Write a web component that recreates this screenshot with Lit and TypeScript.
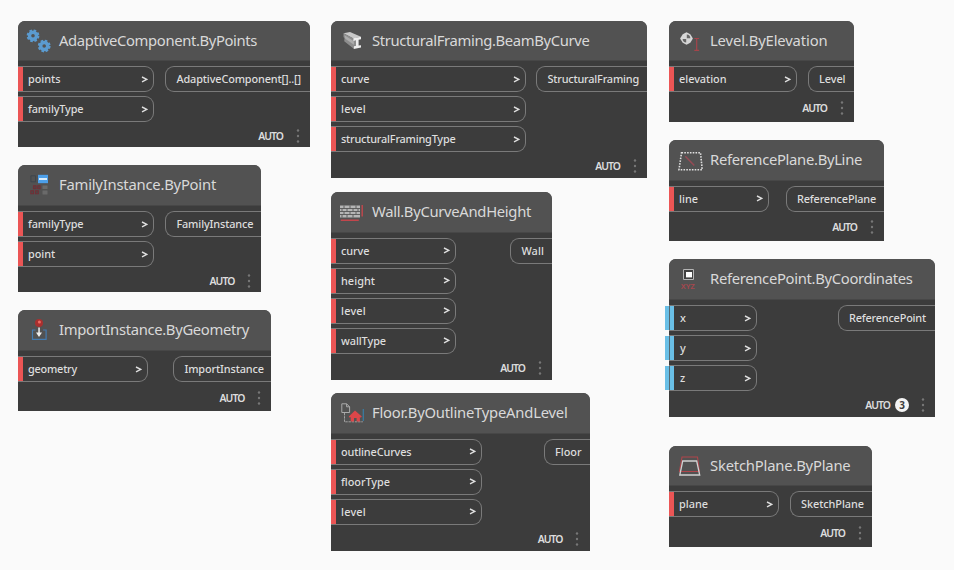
import { LitElement, html, css, svg, nothing } from "lit";
import { customElement, property } from "lit/decorators.js";
import { styleMap } from "lit/directives/style-map.js";

// A caption and the width in pixels it is set to.
type Label = [text: string, width: number];

interface GraphNode {
  icon: string;
  x: number;
  y: number;
  w: number;
  h: number;
  head: number;
  title: Label;
  inputs: Label[];
  inputWidth: number;
  output: Label;
  outputWidth: number;
  laced?: number;
}

const FAMILY = '"Noto Sans", sans-serif';
const TITLE_FONT = `400 14.8px ${FAMILY}`;
const PORT_FONT = `500 10.9px ${FAMILY}`;

const pen = document.createElement("canvas").getContext("2d")!;

function tracking([text, width]: Label, font: string) {
  pen.font = font;
  const spacing = (width + 1 - pen.measureText(text).width) / text.length;
  return styleMap({ letterSpacing: `${spacing.toFixed(3)}px` });
}

const NODES: GraphNode[] = [
  { icon: "gears", x: 18, y: 21, w: 292, h: 126, head: 40, title: ["AdaptiveComponent.ByPoints", 197], inputs: [["points", 31.5], ["familyType", 54.5]], inputWidth: 136, output: ["AdaptiveComponent[]..[]", 123.5], outputWidth: 145 },
  { icon: "family", x: 18, y: 165, w: 243.4, h: 127, head: 41, title: ["FamilyInstance.ByPoint", 156], inputs: [["familyType", 54.5], ["point", 26]], inputWidth: 136, output: ["FamilyInstance", 76], outputWidth: 96.5 },
  { icon: "import", x: 18, y: 310, w: 253.4, h: 101, head: 41, title: ["ImportInstance.ByGeometry", 189], inputs: [["geometry", 48]], inputWidth: 130, output: ["ImportInstance", 78.5], outputWidth: 98.5 },
  { icon: "beam", x: 331, y: 21, w: 316, h: 157, head: 40, title: ["StructuralFraming.BeamByCurve", 216.5], inputs: [["curve", 27.5], ["level", 24], ["structuralFramingType", 113.5]], inputWidth: 195, output: ["StructuralFraming", 90.5], outputWidth: 111 },
  { icon: "wall", x: 331, y: 192, w: 221, h: 188, head: 40.5, title: ["Wall.ByCurveAndHeight", 158], inputs: [["curve", 27.5], ["height", 33], ["level", 24], ["wallType", 44]], inputWidth: 125, output: ["Wall", 21.5], outputWidth: 42 },
  { icon: "floor", x: 331, y: 393, w: 258.5, h: 157.5, head: 40.5, title: ["Floor.ByOutlineTypeAndLevel", 194.5], inputs: [["outlineCurves", 69.5], ["floorType", 48], ["level", 24]], inputWidth: 151, output: ["Floor", 25.5], outputWidth: 46 },
  { icon: "level", x: 669, y: 21, w: 185, h: 100.5, head: 40, title: ["Level.ByElevation", 116.5], inputs: [["elevation", 46.5]], inputWidth: 128, output: ["Level", 25.5], outputWidth: 46.5 },
  { icon: "plane", x: 669, y: 140, w: 215, h: 100.5, head: 40.5, title: ["ReferencePlane.ByLine", 151], inputs: [["line", 18]], inputWidth: 100, output: ["ReferencePlane", 78], outputWidth: 98.5 },
  { icon: "point", x: 669, y: 259, w: 266, h: 157.5, head: 41, title: ["ReferencePoint.ByCoordinates", 201.5], inputs: [["x", 5], ["y", 5.5], ["z", 5]], inputWidth: 88, output: ["ReferencePoint", 76], outputWidth: 97.5, laced: 3 },
  { icon: "sketch", x: 669, y: 446, w: 203, h: 100.5, head: 40, title: ["SketchPlane.ByPlane", 139.5], inputs: [["plane", 28]], inputWidth: 110, output: ["SketchPlane", 62], outputWidth: 82.5 },
];

const gear = (cx: number, cy: number) => svg`
  <g transform="translate(${cx} ${cy})" fill="none" stroke="#5b9bd0">
    <circle r="5.3" stroke-width="2.2" stroke-dasharray="2.5 1.663"/>
    <circle r="3.5" stroke-width="3.4"/>
  </g>`;

const ICONS: Record<string, unknown> = {
  gears: svg`${gear(15, 14.8)}${gear(26.2, 25)}`,
  family: svg`
    <path d="M12.9 10.8h4.6v6h-4.6z" fill="none" stroke="#3e464d"/>
    <path d="M20 9.8h10v8.4H20z" fill="#4c9fe9"/>
    <path d="M21 13h8v2h-8z" fill="#d9ecfb"/>
    <path d="M15.5 20.8h2.6v3h-2.6zM19.7 20.8h2.4v3h-2.4zM12.8 25.8h2.8v3h-2.8zM17.5 25.8h2.8v3h-2.8z" fill="#4a4a4a" stroke="#712f36" stroke-width="1.1"/>
    <path d="M24.5 20.5h5v3.5h-5zM24.5 25.5h5v4h-5z" fill="#6a6a6a"/>`,
  import: svg`
    <circle cx="21" cy="13" r="4" fill="#a9302f"/><circle cx="21.4" cy="12" r="1.5" fill="#ee6a61"/>
    <path d="M17.5 20h-3v9.4h13.6V20h-3" fill="none" stroke="#447bb0" stroke-width="1.2"/>
    <path d="M20.3 17.5h1.5v5H24l-3 4.5-3-4.5h2.3z" fill="#eee"/>`,
  beam: svg`
    <path d="M12.5 12.3L19 11l11 4.8-7.7 1.6z" fill="#c8c8c8"/>
    <path d="M12.5 12.3l9.8 5v2l2.7.8v4.6l-2.2.4v2.6l-9.6-7.5.3-2.7-1-1.6z" fill="#8d8d8d"/>
    <path d="M13.5 14.2l9.4 6v3.6l-8.6-6z" fill="#adadad"/>
    <path d="M22.3 17.3l7.7-1.5v2.4l-2.4.6v5.7l2.4-.3v2.2l-7.2 1.5v-2.6l2.2-.5v-5.4l-2.7.5z" fill="#ededed"/>`,
  wall: svg`
    <path d="M9 13.5h20v12H9z" fill="#b5b5b5"/>
    <path d="M9 16.5h20M9 19.5h20M9 22.5h20M13 13.5v3M19 13.5v3M25 13.5v3M11 16.5v3M16 16.5v3M22 16.5v3M27 16.5v3M13 19.5v3M19 19.5v3M25 19.5v3M11 22.5v3M16 22.5v3M22 22.5v3" fill="none" stroke="#565656" stroke-width=".9"/>
    <path d="M31.2 13v11.5M9.8 28.2h18" fill="none" stroke="#c2464c" stroke-width="1.4"/>`,
  floor: svg`
    <path d="M10.8 10.8h4.8l3 3v5.7h-7.8zM15.6 10.8v3h3" fill="none" stroke="#aaa" stroke-width="1"/>
    <path d="M13.5 20v8.8h18.3" fill="none" stroke="#a2a2a2" stroke-width="1" stroke-dasharray="2.4 .8"/>
    <path d="M32.3 16v12" stroke="#397da5" stroke-width="1.2"/>
    <path d="M24 17.5l6.8 6-1 1.2-.9-.7v4.4h-3.3v-3.3h-2.6v3.3h-3.3V24l-.9.7-1-1.2z" fill="#dc4649"/>`,
  level: svg`
    <path d="M17.5 11.2l3.8 2 2.6 4.3-2.6 4.2-3.8 2.1-3.8-2.1-2.6-4.2 2.6-4.3z" fill="#d6d6d6"/>
    <path d="M17.8 17.3v-3.7a4 4 0 0 1 3.6 3.7zM17.2 17.9v3.7a4 4 0 0 1-3.6-3.7z" fill="#666"/>
    <path d="M25.3 17.5h4.8M25.3 29.4h4.8M27.7 17.5v11.9" fill="none" stroke="#a5444a" stroke-width="1.2"/>`,
  plane: svg`
    <path d="M12.5 12.7h19l1.7 17H10z" fill="none" stroke="#e0e0e0" stroke-width="1.6" stroke-dasharray="1.6 1.2"/>
    <path d="M16.3 16.3l9 9.3" stroke="#964b55" stroke-width="1.5"/>`,
  point: svg`
    <path d="M14.5 10.5h10v10h-10z" fill="#414141" stroke="#b5b5b5" stroke-width="1"/>
    <path d="M17 13h6v5.4h-6z" fill="#fff"/>
    <text class="axes" x="11.8" y="29.6" textLength="14" lengthAdjust="spacingAndGlyphs">XYZ</text>`,
  sketch: svg`
    <path d="M13 11h15.5l2 14.5H10.5z" fill="none" stroke="#b0454b" stroke-width="1.1"/>
    <path d="M13.7 15h14l3 14H10.8z" fill="none" stroke="#d2d2d2" stroke-width="1.3"/>`,
};

@customElement("graph-node")
class GraphNodeElement extends LitElement {
  @property({ attribute: false }) node!: GraphNode;

  static styles = css`
    :host { display: block; }
    .card {
      display: flex; flex-direction: column; height: 100%;
      background: #3c3c3c; border-radius: 7px 7px 0 0; color: #dedede;
      font: 500 10.9px/26px "Noto Sans", sans-serif; white-space: nowrap;
    }
    .head {
      display: flex; align-items: flex-start; flex: none;
      background: #525252; border-radius: 7px 7px 0 0;
      border-bottom: 1px solid #474747; box-sizing: border-box;
    }
    .icon { width: 40px; height: 39px; flex: none; margin-right: 1px; overflow: visible; }
    .axes { font: 600 6.8px "Noto Sans", sans-serif; fill: #a8474e; }
    .title { font: 400 14.8px/38px "Noto Sans", sans-serif; color: #d9d9d9; }
    .ports { display: flex; justify-content: space-between; align-items: flex-start; padding-top: 5.4px; }
    .inputs { display: flex; flex-direction: column; gap: 4px; }
    .port { display: flex; height: 26px; box-sizing: border-box; border: 1px solid #7a7a7a; line-height: 24px; }
    .in { border-left: 0; border-radius: 0 9px 9px 0; justify-content: space-between; padding-right: 5.5px; }
    .in::before { content: ""; width: 5px; margin: 0 5px 0 0; background: #eb5555; flex: none; }
    .laced .in::before { margin-right: 6px; background: linear-gradient(90deg, #56676f 1px, #6abfe6 1px); box-shadow: -4px 0 #6abfe6; }
    .name { flex: 1; }
    .arrow { width: 7px; height: 7px; align-self: center; }
    .out { border-right: 0; border-radius: 9px 0 0 9px; padding-left: 10.5px; }
    .foot { display: flex; flex: 1; justify-content: flex-end; align-items: center; padding: 2px 10.5px 0 0; }
    .auto { font-size: 10.4px; line-height: 14px; letter-spacing: -0.95px; font-weight: 600; }
    .count {
      width: 14px; height: 14px; border-radius: 50%; background: #f4f4f4; color: #3c3c3c;
      font: 700 10px/14px "Noto Sans", sans-serif; text-align: center; margin-left: 6px;
    }
    .more { width: 4px; height: 14px; }
    .auto + .more { margin-left: 12.5px; }
    .count + .more { margin-left: 11.5px; }
    .laced .auto { position: relative; left: 1px; }
  `;

  render() {
    const n = this.node;
    return html`
      <div class="card ${n.laced ? "laced" : ""}">
        <div class="head" style=${styleMap({ height: `${n.head}px` })}>
          <svg class="icon" viewBox="0 0 40 39">${ICONS[n.icon]}</svg>
          <span class="title" style=${tracking(n.title, TITLE_FONT)}>${n.title[0]}</span>
        </div>
        <div class="ports">
          <div class="inputs" style=${styleMap({ width: `${n.inputWidth}px` })}>
            ${n.inputs.map((label) => html`
              <div class="port in">
                <span class="name" style=${tracking(label, PORT_FONT)}>${label[0]}</span>
                <svg class="arrow" viewBox="0 0 7 7"><path d="M1 1l4.8 2.4L1 5.8" fill="none" stroke="#dedede" stroke-width="1.4"/></svg>
              </div>`)}
          </div>
          <div class="port out" style=${styleMap({ width: `${n.outputWidth}px` })}>
            <span style=${tracking(n.output, PORT_FONT)}>${n.output[0]}</span>
          </div>
        </div>
        <div class="foot">
          <span class="auto">AUTO</span>
          ${n.laced ? html`<span class="count">${n.laced}</span>` : nothing}
          <svg class="more" viewBox="0 0 4 14" fill="#777"><circle cx="2" cy="1.5" r="1.2"/><circle cx="2" cy="7" r="1.2"/><circle cx="2" cy="12.5" r="1.2"/></svg>
        </div>
      </div>`;
  }
}

@customElement("app-root")
class AppRoot extends LitElement {
  static styles = css`
    :host { display: block; position: relative; width: 954px; height: 570px; background: #fafafa; overflow: hidden; }
    .node { position: absolute; }
  `;

  render() {
    return NODES.map((n) => html`
      <graph-node class="node" .node=${n}
        style=${styleMap({ left: `${n.x}px`, top: `${n.y}px`, width: `${n.w}px`, height: `${n.h}px` })}></graph-node>`);
  }
}
